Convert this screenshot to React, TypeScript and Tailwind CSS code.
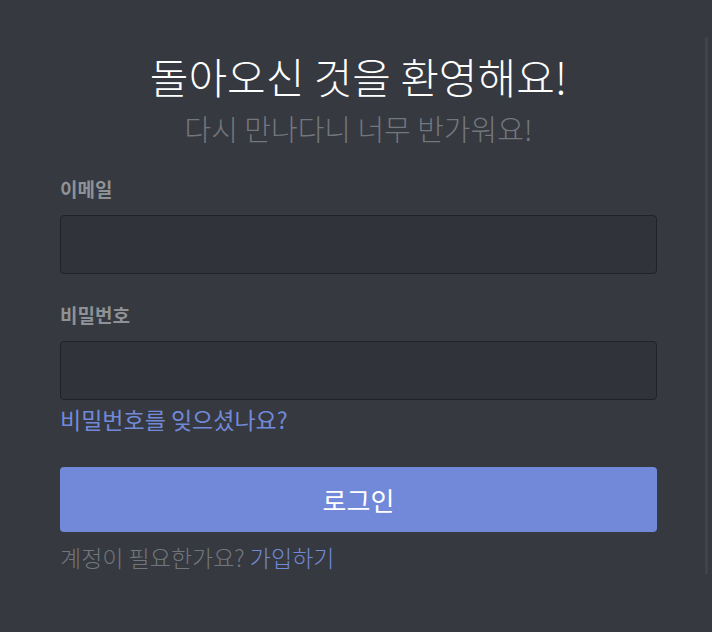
export default function App() {
  const font = { fontFamily: '"Noto Sans CJK KR", "Noto Sans", sans-serif' };
  return (
    <div className="relative w-[712px] h-[632px] bg-[#36393f] overflow-hidden" style={font}>
      {/* scroll track */}
      <div className="absolute left-[705px] top-[37px] w-[3px] h-[537px] bg-[#404349]"></div>

      <div className="flex flex-col pl-[60px] pr-[55px] pt-[48px]">
        <h1 className="text-center text-[42px] font-light leading-[56px] text-white">
          돌아오신 것을 환영해요!
        </h1>
        <p className="text-center text-[29px] font-light leading-[38px] text-[#72767d] mt-[5px]">
          다시 만나다니 너무 반가워요!
        </p>

        <label className="mt-[30px] text-[19px] font-bold leading-[24px] text-[#8e9297]">이메일</label>
        <div className="mt-[14px] h-[59px] rounded-[4px] border border-[#202225] bg-[#303339]"></div>

        <label className="mt-[29px] text-[19px] font-bold leading-[24px] text-[#8e9297]">비밀번호</label>
        <div className="mt-[14px] h-[59px] rounded-[4px] border border-[#202225] bg-[#303339]"></div>

        <a className="mt-[4px] text-[23px] leading-[30px] text-[#7289da]">비밀번호를 잊으셨나요?</a>

        <button className="mt-[33px] h-[65px] rounded-[4px] bg-[#7289da] text-[26px] font-normal text-white">
          로그인
        </button>

        <p className="mt-[10px] text-[23px] font-light leading-[30px] text-[#72767d]">
          계정이 필요한가요? <span className="text-[#7289da]">가입하기</span>
        </p>
      </div>
    </div>
  );
}
